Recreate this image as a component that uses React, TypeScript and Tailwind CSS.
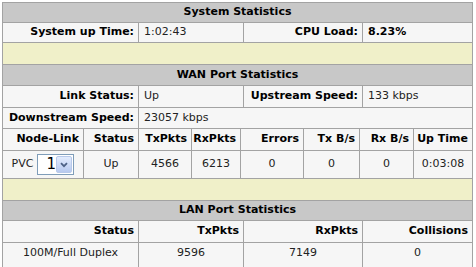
import React from "react";

const line = "border-[#a3a3a3]";

function Header({ title, h }: { title: string; h: string }) {
  return (
    <div className={`${h} flex items-center justify-center bg-[#c8c8c8] border-b ${line} font-bold text-black`}>
      {title}
    </div>
  );
}

function Spacer({ h }: { h: string }) {
  return <div className={`${h} bg-[#f0f0c9] border-b ${line}`} />;
}

type CellProps = {
  children?: React.ReactNode;
  align?: "left" | "right" | "center";
  bold?: boolean;
  last?: boolean;
  extra?: string;
};

function Cell({ children, align = "left", bold, last, extra = "" }: CellProps) {
  const a =
    align === "right" ? "justify-end pr-[4px]" : align === "center" ? "justify-center" : "justify-start pl-[5px]";
  return (
    <div
      className={`flex items-center ${a} ${last ? "" : `border-r ${line}`} ${
        bold ? "font-bold text-black" : "text-[#222]"
      } whitespace-nowrap overflow-hidden ${extra}`}
    >
      {children}
    </div>
  );
}

function PvcSelect() {
  return (
    <div className="flex items-center gap-[4px]">
      <span>PVC</span>
      <div className="relative h-[21px] w-[37px] border border-[#7f9db9] bg-white">
        <span className="absolute left-[8px] top-[0px] text-[15px] leading-[19px] text-black">1</span>
        <div className="absolute right-[1px] top-[1px] h-[17px] w-[16px] rounded-[2px] border border-[#b8c9ea] bg-gradient-to-b from-[#e3ecfd] to-[#b7c9ef] flex items-center justify-center">
          <svg width="8" height="6" viewBox="0 0 8 6">
            <path d="M1 1.2 L4 4.2 L7 1.2" fill="none" stroke="#4d6185" strokeWidth="1.8" />
          </svg>
        </div>
      </div>
    </div>
  );
}

const four = "grid grid-cols-[136px_105px_119px_109px]";
const wan = "grid grid-cols-[81px_55px_53px_49px_63px_56px_54px_58px]";

export default function App() {
  return (
    <div className="w-[476px] h-[267px] bg-white overflow-hidden">
      <div
        className={`ml-[2px] mt-[2px] w-[471px] border-l border-r border-t ${line} bg-[#f6f6f6] text-[11px] font-['DejaVu_Sans',Verdana,sans-serif]`}
      >
        <Header title="System Statistics" h="h-[20px]" />
        <div className={`${four} h-[20px] border-b ${line}`}>
          <Cell align="right" bold>System up Time:</Cell>
          <Cell>1:02:43</Cell>
          <Cell align="right" bold>CPU Load:</Cell>
          <Cell bold last>8.23%</Cell>
        </div>
        <Spacer h="h-[22px]" />

        <Header title="WAN Port Statistics" h="h-[21px]" />
        <div className={`${four} h-[22px] border-b ${line}`}>
          <Cell align="right" bold>Link Status:</Cell>
          <Cell>Up</Cell>
          <Cell align="right" bold>Upstream Speed:</Cell>
          <Cell last>133 kbps</Cell>
        </div>
        <div className={`grid grid-cols-[136px_333px] h-[21px] border-b ${line}`}>
          <Cell align="right" bold>Downstream Speed:</Cell>
          <Cell last>23057 kbps</Cell>
        </div>
        <div className={`${wan} h-[22px] border-b ${line}`}>
          <Cell align="right" bold>Node-Link</Cell>
          <Cell align="right" bold>Status</Cell>
          <Cell align="right" bold>TxPkts</Cell>
          <Cell align="right" bold>RxPkts</Cell>
          <Cell align="right" bold>Errors</Cell>
          <Cell align="right" bold>Tx B/s</Cell>
          <Cell align="right" bold>Rx B/s</Cell>
          <Cell align="right" bold last>Up Time</Cell>
        </div>
        <div className={`${wan} h-[28px] border-b ${line}`}>
          <Cell align="center">
            <PvcSelect />
          </Cell>
          <Cell align="center">Up</Cell>
          <Cell align="center">4566</Cell>
          <Cell align="center">6213</Cell>
          <Cell align="center">0</Cell>
          <Cell align="center">0</Cell>
          <Cell align="center">0</Cell>
          <Cell align="center" last>0:03:08</Cell>
        </div>
        <Spacer h="h-[22px]" />

        <Header title="LAN Port Statistics" h="h-[20px]" />
        <div className={`${four} h-[22px] border-b ${line}`}>
          <Cell align="right" bold>Status</Cell>
          <Cell align="right" bold>TxPkts</Cell>
          <Cell align="right" bold>RxPkts</Cell>
          <Cell align="right" bold last>Collisions</Cell>
        </div>
        <div className={`${four} h-[24px]`}>
          <Cell align="center" extra="pb-[4px]">100M/Full Duplex</Cell>
          <Cell align="center" extra="pb-[4px]">9596</Cell>
          <Cell align="center" extra="pb-[4px]">7149</Cell>
          <Cell align="center" last extra="pb-[4px]">0</Cell>
        </div>
      </div>
    </div>
  );
}
